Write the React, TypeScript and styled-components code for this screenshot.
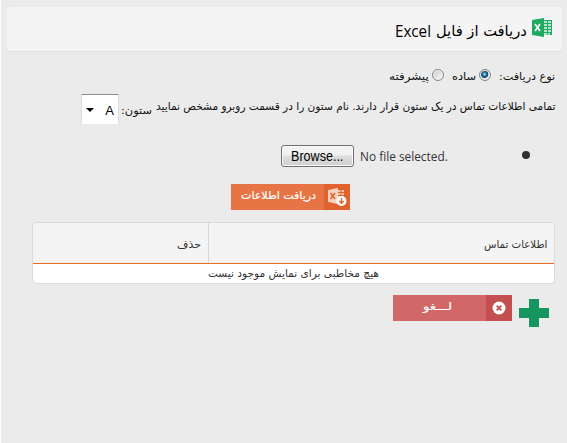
import React, { useLayoutEffect, useRef, useState } from "react";
import styled, { createGlobalStyle } from "styled-components";

const Global = createGlobalStyle`
  * { box-sizing: border-box; }
  body { margin: 0; background: #ebebeb; overflow: hidden; }
`;

const Page = styled.main`
  width: 567px;
  height: 443px;
  padding: 7px 12px 0 6px;
  background: #ebebeb;
  border-left: 1px solid #fcfcfc;
  direction: rtl;
  color: #111;
  font-family: "DejaVu Sans", sans-serif;
  font-size: 11px;
`;

type Face = "persian" | "humanist" | "arial";

const faces: Record<Face, string> = {
  persian: '"DejaVu Sans", sans-serif',
  humanist: '"Open Sans", "Noto Sans", sans-serif',
  arial: '"Liberation Sans", sans-serif',
};

const FitBox = styled.span<{ $width: number; $size: number; $line: number; $face: Face }>`
  display: block;
  flex: none;
  direction: rtl;
  width: ${(p) => p.$width}px;
  height: ${(p) => p.$line}px;
  line-height: ${(p) => p.$line}px;
  font-size: ${(p) => p.$size}px;
  font-family: ${(p) => faces[p.$face]};
  font-weight: 400;
  white-space: nowrap;
`;

const FitInner = styled.span<{ $face: Face }>`
  display: inline-block;
  direction: ${(p) => (p.$face === "persian" ? "rtl" : "ltr")};
  transform-origin: right center;
`;

type FitProps = { width: number; size?: number; line?: number; face?: Face; children: string };

/* Condenses or stretches a label so it fills its column exactly. */
function Fit({ width, size = 11, line = 16, face = "persian", children }: FitProps) {
  const ref = useRef<HTMLSpanElement>(null);
  const [scale, setScale] = useState(1);
  useLayoutEffect(() => {
    if (ref.current) setScale(width / ref.current.offsetWidth);
  }, [width, children]);
  return (
    <FitBox $width={width} $size={size} $line={line} $face={face}>
      <FitInner ref={ref} $face={face} style={{ transform: `scaleX(${scale})` }}>{children}</FitInner>
    </FitBox>
  );
}

const Header = styled.header`
  display: flex;
  align-items: flex-start;
  height: 44px;
  margin-right: -7px;
  padding: 10px 9px 0 0;
  background: #f4f4f4;
  border-radius: 3px;
  box-shadow: 0 1px 1px #dedede;
  color: #000;
`;

const Title = styled.h1`
  display: flex;
  gap: 5px;
  margin: 3px 5px 0 0;
  font-weight: 400;
`;

const TypeRow = styled.div`
  display: flex;
  height: 18px;
  margin-top: 17px;
`;

const TypeText = styled.span`
  padding-top: 1px;
`;

const Radio = styled.i<{ $on?: boolean }>`
  flex: none;
  width: 12px;
  height: 12px;
  margin-top: 1px;
  border: 1px solid #858585;
  border-radius: 50%;
  box-shadow: inset 0 0 0 1px #f2f2f2;
  background: ${(p) =>
    p.$on
      ? "radial-gradient(circle at 45% 42%, #b9ecfa 0, #2b8fbd 1.5px, #123e5e 3.3px, #dfe4e8 4.2px)"
      : "linear-gradient(135deg, #c9cdd1, #fafafa)"};
`;

const Space = styled.span<{ $w: number }>`
  flex: none;
  width: ${(p) => p.$w}px;
`;

const ColumnRow = styled.div`
  display: flex;
  height: 32px;
  margin-top: 8px;
`;

const Hint = styled.div`
  margin-top: 5px;
`;

const ColumnLabel = styled.div`
  margin: 9px 4px 0 2px;
`;

const Select = styled.div`
  display: flex;
  align-items: center;
  justify-content: space-between;
  width: 38px;
  height: 30px;
  padding: 1px 4px 0 4px;
  border-top: 1px solid #8c8c92;
  border-left: 1px solid #dcdce4;
  border-right: 1px solid #dcdce4;
  background: #fff;
  font: 13px "Liberation Sans", sans-serif;
  color: #000;
`;

const FileRow = styled.div`
  display: flex;
  align-items: center;
  height: 22px;
  margin-top: 19px;
  padding-right: 25px;
`;

const Bullet = styled.i`
  width: 8px;
  height: 8px;
  margin: 0 0 3px 74px;
  border-radius: 50%;
  background: #303030;
`;

const Browse = styled.button`
  display: flex;
  align-items: center;
  justify-content: center;
  width: 73px;
  height: 22px;
  margin-right: 6px;
  padding: 0;
  border: 1px solid #707070;
  border-radius: 3px;
  box-shadow: inset 0 0 0 1px #fafafa;
  background: linear-gradient(#f2f2f2 0 45%, #dedede 50%, #d0d0d0);
  color: #000;
`;

const FileName = styled.div`
  padding-top: 1px;
  color: #333;
`;

const Action = styled.button<{ $tone: "orange" | "red" }>`
  display: flex;
  align-items: stretch;
  width: 119px;
  height: 26px;
  padding: 0;
  border: 0;
  background: ${(p) => (p.$tone === "orange" ? "#e77444" : "#d16767")};
  color: #fff;
  -webkit-text-stroke: 0.2px #fff;
`;

const ActionIcon = styled.span<{ $tone: "orange" | "red" }>`
  display: flex;
  align-items: center;
  justify-content: center;
  width: 26px;
  background: ${(p) => (p.$tone === "orange" ? "#e2622d" : "#c34f50")};
`;

const ActionText = styled.span<{ $inset: number }>`
  display: flex;
  flex: 1;
  padding: 4px ${(p) => p.$inset}px 0 0;
`;

const ImportRow = styled.div`
  display: flex;
  margin: 17px 205px 0 0;
`;

const Table = styled.section`
  width: 521px;
  height: 60px;
  margin: 13px 1px 0 0;
  border-radius: 4px;
  overflow: hidden;
  background: #fff;
  box-shadow: 0 0 0 1px #dadada;
  color: #333;
`;

const HeadRow = styled.div`
  display: flex;
  height: 41px;
  background: #f4f4f4;
  border-bottom: 1px solid #e96c26;
`;

const HeadCell = styled.div<{ $w: number }>`
  width: ${(p) => p.$w}px;
  padding: 14px 7px 0 0;
  & + & { border-right: 1px solid #d8d8d8; }
`;

const Empty = styled.div`
  display: flex;
  justify-content: center;
  padding-top: 2px;
`;

const Footer = styled.footer`
  display: flex;
  gap: 7px;
  margin: 12px 6px 0 0;
`;

const Plus = styled.svg`
  width: 30px;
  height: 28px;
  margin-top: 4px;
`;

function ExcelIcon() {
  return (
    <svg width="21" height="21" viewBox="0 0 21 21">
      <path d="M11 3h9v15h-9z" fill="#1faa61" />
      <path d="M12 5h7M12 8h7M12 11h7M12 14h7M12 17h6" stroke="#f4f4f4" strokeWidth="1.3" />
      <path d="M15.5 3v15" stroke="#1faa61" strokeWidth="1" />
      <path d="M0 3 12 1v19L0 18z" fill="#1faa61" />
      <path d="m3 7 5 7M8 7l-5 7" stroke="#fff" strokeWidth="1.7" />
    </svg>
  );
}

function ImportIcon() {
  return (
    <svg width="20" height="20" viewBox="0 0 20 20">
      <path d="M10 3h7v10h-7z" fill="#f5c3ab" />
      <path d="M10 5.500h7M10 8.500h7M14 3v9" stroke="#e2622d" strokeWidth="1" />
      <path d="M1 3 11 1v16L1 15z" fill="#f8d3c2" />
      <path d="m3.500 6 4.500 6M8 6l-4.500 6" stroke="#df6231" strokeWidth="1.5" />
      <circle cx="14.500" cy="14" r="5" fill="#fff" />
      <path d="M14.500 11v5M12.300 14l2.200 2.300 2.200-2.300" fill="none" stroke="#e2622d" strokeWidth="1.4" />
    </svg>
  );
}

export default function App() {
  return (
    <>
      <Global />
      <Page>
        <Header>
          <ExcelIcon />
          <Title>
            <Fit width={91} size={15} line={22}>دریافت از فایل</Fit>
            <Fit width={36} size={16} line={22} face="humanist">Excel</Fit>
          </Title>
        </Header>
        <TypeRow>
          <TypeText><Fit width={56}>نوع دریافت:</Fit></TypeText>
          <Space $w={8} />
          <Radio $on />
          <Space $w={3} />
          <TypeText><Fit width={24}>ساده</Fit></TypeText>
          <Space $w={8} />
          <Radio />
          <Space $w={3} />
          <TypeText><Fit width={40}>پیشرفته</Fit></TypeText>
        </TypeRow>
        <ColumnRow>
          <Hint><Fit width={399}>تمامی اطلاعات تماس در یک ستون قرار دارند. نام ستون را در قسمت روبرو مشخص نمایید</Fit></Hint>
          <ColumnLabel><Fit width={31}>ستون:</Fit></ColumnLabel>
          <Select>
            <span>A</span>
            <svg width="8" height="4" viewBox="0 0 8 4"><path d="M0 0h8L4 4z" /></svg>
          </Select>
        </ColumnRow>
        <FileRow>
          <Bullet />
          <FileName><Fit width={88} size={12} face="humanist">No file selected.</Fit></FileName>
          <Browse><Fit width={52} size={14} face="arial">Browse...</Fit></Browse>
        </FileRow>
        <ImportRow>
          <Action $tone="orange">
            <ActionIcon $tone="orange"><ImportIcon /></ActionIcon>
            <ActionText $inset={8}><Fit width={75}>دریافت اطلاعات</Fit></ActionText>
          </Action>
        </ImportRow>
        <Table>
          <HeadRow>
            <HeadCell $w={345}><Fit width={63}>اطلاعات تماس</Fit></HeadCell>
            <HeadCell $w={176}><Fit width={24}>حذف</Fit></HeadCell>
          </HeadRow>
          <Empty><Fit width={171}>هیچ مخاطبی برای نمایش موجود نیست</Fit></Empty>
        </Table>
        <Footer>
          <Plus viewBox="0 0 30 28"><path d="M10 0h10v9h10v10H20v9H10v-9H0V9h10z" fill="#15965f" /></Plus>
          <Action $tone="red">
            <ActionIcon $tone="red">
              <svg width="14" height="14" viewBox="0 0 14 14">
                <circle cx="7" cy="7" r="6.500" fill="#fff" />
                <path d="m4.700 4.700 4.600 4.600m0-4.600L4.700 9.300" stroke="#c34f50" strokeWidth="1.8" />
              </svg>
            </ActionIcon>
            <ActionText $inset={31}><Fit width={29}>لـــغو</Fit></ActionText>
          </Action>
        </Footer>
      </Page>
    </>
  );
}
